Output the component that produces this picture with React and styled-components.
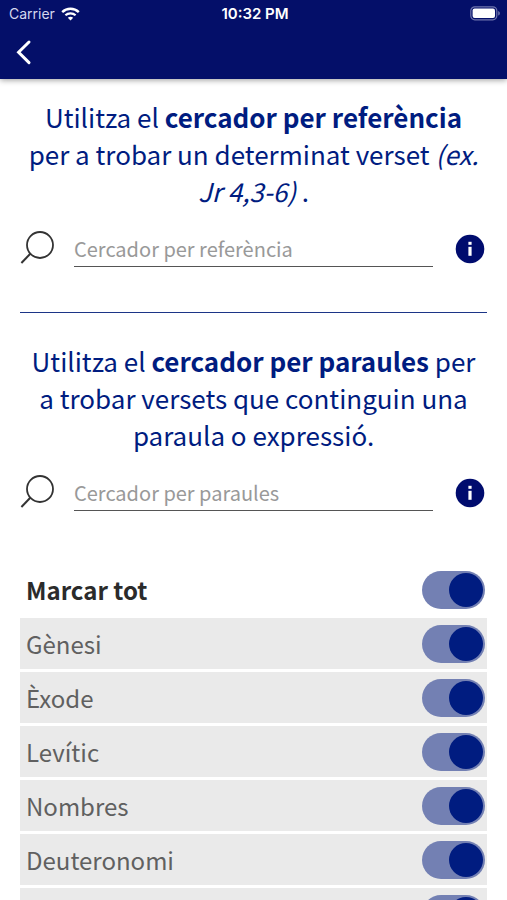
import React, { useState } from "react";
import styled, { createGlobalStyle } from "styled-components";

const BOOKS = ["Gènesi", "Èxode", "Levític", "Nombres", "Deuteronomi", "Josuè"];

const SearchField = ({ id, label }) => {
  return (
    <SearchRow>
      <SearchLabel htmlFor={id} aria-label={label}>
        <svg width="34" height="34" viewBox="0 0 34 34" fill="none">
          <circle cx="20" cy="14" r="13" stroke="#333" strokeWidth="1.8" />
          <path d="M10.5 22.5L1.4 32" stroke="#333" strokeWidth="2" />
        </svg>
      </SearchLabel>
      <SearchInput id={id} type="text" placeholder={label} />
      <InfoButton type="button" aria-label="Informació">
        <svg width="30" height="30" viewBox="0 0 30 30">
          <circle cx="15" cy="15" r="14.3" fill="#000c6e" />
          <rect x="13.4" y="7.8" width="3.2" height="3" fill="#fff" />
          <rect x="13.4" y="12.8" width="3.2" height="9" fill="#fff" />
        </svg>
      </InfoButton>
    </SearchRow>
  );
};

const App = () => {
  const [checked, setChecked] = useState(BOOKS);
  const allChecked = checked.length === BOOKS.length;

  const toggleBook = (book) => {
    setChecked(
      checked.includes(book)
        ? checked.filter((item) => item !== book)
        : [...checked, book]
    );
  };

  return (
    <>
      <GlobalStyle />
      <Screen>
        <Header>
          <StatusBar>
            <Carrier>
              Carrier
              <svg width="19" height="14" viewBox="0 0 19 14" fill="none">
                <path
                  d="M1.2 5.1C5.8 0.6 13.2 0.6 17.8 5.1"
                  stroke="#fff"
                  strokeWidth="2.4"
                />
                <path
                  d="M4.4 8.3C7.3 5.6 11.7 5.6 14.6 8.3"
                  stroke="#fff"
                  strokeWidth="2.2"
                />
                <path
                  d="M6.8 10.8C8.4 9.4 10.6 9.4 12.2 10.8L9.5 13.6Z"
                  fill="#fff"
                />
              </svg>
            </Carrier>
            <Clock>10:32 PM</Clock>
            <Battery>
              <svg width="31" height="15" viewBox="0 0 31 15">
                <rect
                  x="0.8"
                  y="0.8"
                  width="26"
                  height="13"
                  rx="4"
                  fill="none"
                  stroke="#6f75ad"
                  strokeWidth="1.2"
                />
                <rect x="2.6" y="2.6" width="22.4" height="9.4" rx="2" fill="#fff" />
                <path d="M28.2 5C30.4 5.8 30.4 8.8 28.2 9.6Z" fill="#6f75ad" />
              </svg>
            </Battery>
          </StatusBar>
          <BackButton type="button" aria-label="Enrere">
            <svg width="18" height="26" viewBox="0 0 18 26" fill="none">
              <path
                d="M14 3L3.6 13.2L14 23.6"
                stroke="#fff"
                strokeWidth="3"
                strokeLinecap="round"
              />
            </svg>
          </BackButton>
        </Header>
        <Content>
          <SearchSection>
            <Intro>
              Utilitza el <strong>cercador per referència</strong> per a trobar
              un determinat verset <em>(ex. Jr 4,3-6)</em> .
            </Intro>
            <SearchField id="reference" label="Cercador per referència" />
          </SearchSection>
          <Divider />
          <SearchSection>
            <Intro>
              Utilitza el <strong>cercador per paraules</strong> per a trobar
              versets que continguin una paraula o expressió.
            </Intro>
            <SearchField id="words" label="Cercador per paraules" />
          </SearchSection>
          <BookList>
            <BookRow $main>
              Marcar tot
              <Switch
                type="checkbox"
                checked={allChecked}
                onChange={() => setChecked(allChecked ? [] : BOOKS)}
              />
            </BookRow>
            {BOOKS.map((book) => (
              <BookRow key={book}>
                {book}
                <Switch
                  type="checkbox"
                  checked={checked.includes(book)}
                  onChange={() => toggleBook(book)}
                />
              </BookRow>
            ))}
          </BookList>
        </Content>
      </Screen>
    </>
  );
};

export default App;

const GlobalStyle = createGlobalStyle`
  * {
    box-sizing: border-box;
  }
  body {
    margin: 0;
    background: #fff;
    font-family: "Noto Sans CJK SC", "Noto Sans", sans-serif;
  }
  button {
    display: flex;
    padding: 0;
    border: none;
    background: none;
    cursor: pointer;
  }
  svg {
    display: block;
  }
`;

const Screen = styled.div`
  display: flex;
  flex-direction: column;
  height: 100vh;
`;

const Header = styled.header`
  flex: none;
  z-index: 1;
  padding-bottom: 14px;
  background: #040f69;
  box-shadow: 0 1px 6px rgba(0, 0, 0, 0.4);
`;

const StatusBar = styled.div`
  display: grid;
  grid-template-columns: 1fr auto 1fr;
  align-items: center;
  height: 27px;
  padding: 0 6px 0 9px;
  color: #fff;
  font-family: Inter, "Liberation Sans", sans-serif;
  font-size: 15px;
`;

const Carrier = styled.div`
  display: flex;
  align-items: center;
  gap: 6px;
  color: #d5d8ee;
  font-size: 14px;
`;

const Clock = styled.div`
  font-weight: 600;
`;

const Battery = styled.div`
  justify-self: end;
`;

const BackButton = styled.button`
  margin: 12px 0 0 15px;
`;

const Content = styled.main`
  flex: 1;
  min-height: 0;
  padding: 19px 20px 0;
  overflow-y: auto;
  scrollbar-width: none;
`;

const SearchSection = styled.section`
  display: flex;
  flex-direction: column;
  gap: 22px;
`;

const Intro = styled.p`
  margin: 0;
  padding: 0 6px;
  color: #001c80;
  font-size: 26px;
  line-height: 37px;
  text-align: center;
`;

const SearchRow = styled.div`
  display: flex;
  align-items: center;
  height: 36px;
  padding-right: 2px;
`;

const SearchLabel = styled.label`
  align-self: flex-start;
`;

const SearchInput = styled.input`
  flex: 1;
  min-width: 0;
  height: 36px;
  margin: 0 22px 0 20px;
  padding: 0;
  border: none;
  border-bottom: 1px solid #555;
  border-radius: 0;
  outline: none;
  background: none;
  color: #333;
  font-family: inherit;
  font-size: 20px;

  &::placeholder {
    color: #999;
    opacity: 1;
  }
`;

const InfoButton = styled.button`
  flex: none;
`;

const Divider = styled.hr`
  margin: 45px 0 29px;
  border: none;
  border-top: 1px solid #1c3587;
`;

const BookList = styled.div`
  display: flex;
  flex-direction: column;
  gap: 3px;
  margin-top: 53px;
`;

const BookRow = styled.label`
  display: flex;
  flex: none;
  align-items: center;
  justify-content: space-between;
  height: 51px;
  padding: 0 2px 0 6px;
  background: ${({ $main }) => ($main ? "#fff" : "#eaeaea")};
  color: ${({ $main }) => ($main ? "#2b2b2b" : "#606060")};
  font-size: 24px;
  line-height: 24px;
  font-weight: ${({ $main }) => ($main ? 700 : 400)};
`;

const Switch = styled.input`
  display: flex;
  align-items: center;
  width: 63px;
  height: 38px;
  margin: 0;
  padding: 0 2px;
  border-radius: 19px;
  appearance: none;
  background: #7380b3;
  cursor: pointer;

  &::before {
    content: "";
    width: 34px;
    height: 34px;
    border-radius: 50%;
    background: #001c80;
  }
  &:checked {
    justify-content: flex-end;
  }
  &:not(:checked) {
    background: #bbb;
  }
  &:not(:checked)::before {
    background: #fff;
  }
`;
